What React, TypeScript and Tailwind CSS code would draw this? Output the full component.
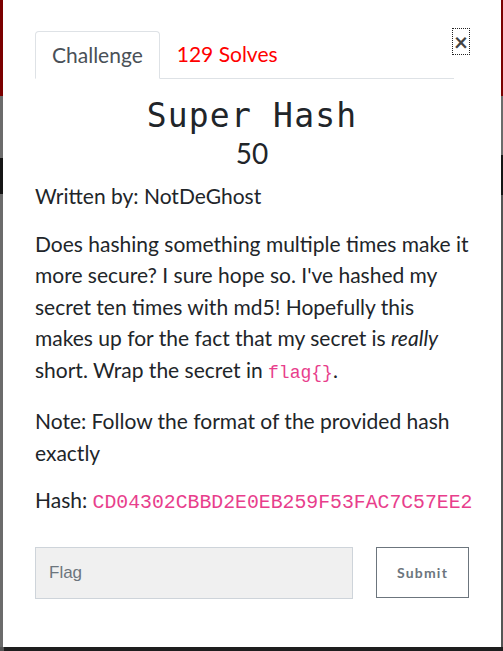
const lato = { fontFamily: "Lato, 'Noto Sans', sans-serif" };

const App = () => {
  return (
    <div className="flex h-[651px] w-[503px] flex-col overflow-hidden bg-[#1c1c1c]">
      <div className="flex h-[647px]">
        {/* backdrop left */}
        <div className="flex w-[3px] flex-col">
          <div className="h-[96px] bg-[#7b0000]" />
          <div className="h-[62px] bg-[#6b6b6b]" />
          <div className="h-[36px] bg-[#151515]" />
          <div className="flex-1 bg-[#6b6b6b]" />
        </div>

        {/* modal */}
        <div
          className="flex w-[498px] flex-col bg-white px-[32px] pt-[31px] text-[#212529]"
          style={lato}
        >
          <div className="flex items-start">
            <div className="flex w-[420px] border-b border-[#dee2e6]">
              <div className="-mb-px rounded-t-[4px] border border-b-white border-[#dee2e6] bg-white px-[16px] py-[10px] text-[21px] leading-[26px] text-[#495057]">
                Challenge
              </div>
              <div className="px-[17px] py-[10px] text-[21px] leading-[26px] text-[#ff0000]">
                129 Solves
              </div>
            </div>
            <button className="-ml-px -mt-[2px] flex h-[25px] w-[16px] items-center justify-center outline-1 outline-dotted outline-[#222] text-[24px] leading-none font-bold text-[#444]">
              ×
            </button>
          </div>

          <h2
            className="mt-[17px] text-center text-[33px] leading-[40px] tracking-[1.2px] text-[#212529]"
            style={{ fontFamily: "'DejaVu Sans Mono', monospace" }}
          >
            Super Hash
          </h2>
          <h3 className="text-center text-[28px] leading-[34px] text-[#212529]">
            50
          </h3>

          <p className="mt-[10px] text-[21px] leading-[31.5px]">
            Written by: NotDeGhost
          </p>

          <p className="mt-[16px] text-[21px] leading-[31.5px]">
            Does hashing something multiple times make it more secure? I sure
            hope so. I've hashed my secret ten times with md5! Hopefully this
            makes up for the fact that my secret is <em>really</em> short. Wrap
            the secret in{" "}
            <code
              className="text-[18px] text-[#e83e8c]"
              style={{ fontFamily: "'Liberation Mono', monospace" }}
            >
              flag{"{}"}
            </code>
            .
          </p>

          <p className="mt-[16px] text-[21px] leading-[31.5px]">
            Note: Follow the format of the provided hash exactly
          </p>

          <p className="mt-[16px] whitespace-nowrap text-[21px] leading-[31.5px]">
            Hash:{" "}
            <code
              className="text-[19.8px] text-[#e83e8c]"
              style={{ fontFamily: "'Liberation Mono', monospace" }}
            >
              CD04302CBBD2E0EB259F53FAC7C57EE2
            </code>
          </p>

          <div className="mt-[27px] flex items-start gap-[23px]">
            <input
              placeholder="Flag"
              className="h-[52px] w-[318px] border border-[#ced4da] bg-[#f0f0f0] px-[13px] text-[17px] text-[#495057] placeholder:text-[#6c757d]"
              style={{ fontFamily: "'Liberation Sans', Arial, sans-serif" }}
            />
            <button className="h-[51px] w-[93px] border border-[#6c757d] bg-white text-[14px] font-bold tracking-[1.2px] text-[#6c757d]">
              Submit
            </button>
          </div>
        </div>

        {/* backdrop right */}
        <div className="flex w-[2px] flex-col">
          <div className="h-[96px] bg-[#7b0000]" />
          <div className="h-[59px] bg-[#6b6b6b]" />
          <div className="h-[40px] bg-[#151515]" />
          <div className="flex-1 bg-[#555]" />
        </div>
      </div>
      <div className="flex h-[4px]">
        <div className="w-[4px] bg-[#555]" />
        <div className="flex-1 bg-[#1e1e1e]" />
      </div>
    </div>
  );
};

export default App;
